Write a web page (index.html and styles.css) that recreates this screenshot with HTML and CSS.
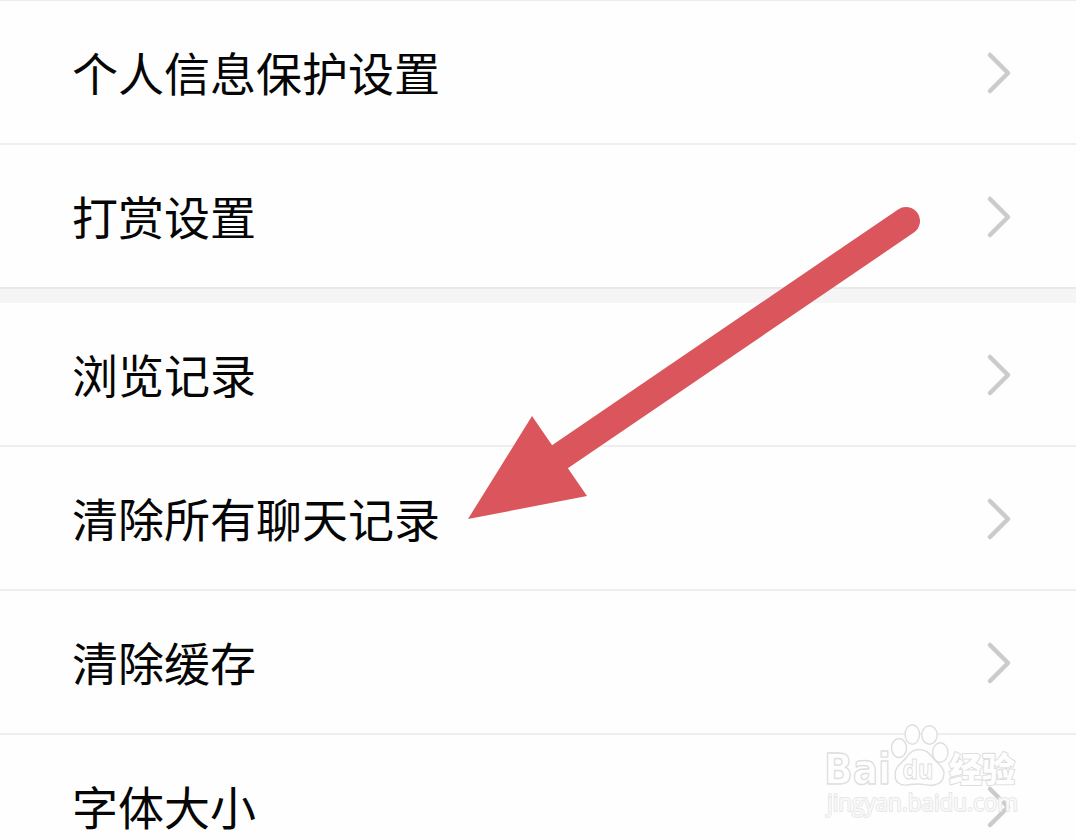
FILE: index.html
```
<!DOCTYPE html>
<html lang="zh-CN">
<head>
    <meta charset="UTF-8">
    <meta name="viewport" content="width=device-width, initial-scale=1.0">
    <title>设置</title>
    <link rel="stylesheet" href="styles.css">
</head>
<body>
    <div class="page">
        <ul class="group">
            <li class="row"><span>个人信息保护设置</span><svg class="chevron" viewBox="0 0 26 44"><path d="M4 4 L22 22 L4 40"/></svg></li>
            <li class="row"><span>打赏设置</span><svg class="chevron" viewBox="0 0 26 44"><path d="M4 4 L22 22 L4 40"/></svg></li>
        </ul>
        <ul class="group">
            <li class="row"><span>浏览记录</span><svg class="chevron" viewBox="0 0 26 44"><path d="M4 4 L22 22 L4 40"/></svg></li>
            <li class="row"><span>清除所有聊天记录</span><svg class="chevron" viewBox="0 0 26 44"><path d="M4 4 L22 22 L4 40"/></svg></li>
            <li class="row"><span>清除缓存</span><svg class="chevron" viewBox="0 0 26 44"><path d="M4 4 L22 22 L4 40"/></svg></li>
            <li class="row"><span>字体大小</span><svg class="chevron" viewBox="0 0 26 44"><path d="M4 4 L22 22 L4 40"/></svg></li>
        </ul>

        <svg class="arrow" viewBox="0 0 460 320">
            <path class="shaft" d="M446 21 L90 263.5"/>
            <path class="head" d="M8 319 L72 216 L127 296 Z"/>
        </svg>

        <svg class="watermark" viewBox="0 0 200 96">
            <g class="logo">
                <text class="bai" x="4" y="64" textLength="67" lengthAdjust="spacingAndGlyphs">Bai</text>
                <path d="M99 29.5 C93 29.5 89 33 86 38 C82 43 75 46 75 55 C75 62 80 66 87 65 C92 64 94 64 99 64 C105 64 108 66 114 65 C121 64 124 60 124 53 C124 47 117 43 113 38 C109 33 106 29.5 99 29.5 Z"/>
                <ellipse cx="79" cy="28" rx="7.5" ry="9.5"/>
                <ellipse cx="92.3" cy="14.5" rx="7.2" ry="9.7"/>
                <ellipse cx="109.5" cy="15" rx="7.7" ry="9.2"/>
                <ellipse cx="120.3" cy="32.5" rx="7.7" ry="9.7"/>
                <text class="du" x="82.5" y="59" textLength="31" lengthAdjust="spacingAndGlyphs">du</text>
                <text class="jingyan" x="129" y="62" textLength="66" lengthAdjust="spacingAndGlyphs">经验</text>
            </g>
            <text class="url" x="7" y="91" textLength="191" lengthAdjust="spacingAndGlyphs">jingyan.baidu.com</text>
        </svg>
    </div>
</body>
</html>
```
FILE: styles.css
```
* {
    box-sizing: border-box;
}
body {
    margin: 0;
    background: #fefefe;
    color: #060606;
    font-family: "Noto Sans CJK SC", sans-serif;
    overflow: hidden;
}
.page {
    position: relative;
    height: 840px;
    overflow: hidden;
    border-top: 1px solid #ececec;
}
.group {
    list-style: none;
    margin: 0;
    padding: 0;
}
.group + .group {
    border-top: 14px solid #f5f5f5;
}
.row {
    display: flex;
    align-items: center;
    justify-content: space-between;
    height: 144px;
    padding: 0 64px 0 72px;
    border-bottom: 2px solid #eeeeee;
    font-size: 46px;
    line-height: 66px;
}
.group:first-child .row:last-child {
    border-bottom-color: #e9e9e9;
}
.row span {
    padding-bottom: 2px;
}
.chevron {
    width: 26px;
    height: 44px;
    margin-top: 2px;
    fill: none;
    stroke: #cbcbcb;
    stroke-width: 4.5;
    stroke-linecap: round;
    stroke-linejoin: round;
}
.arrow {
    position: absolute;
    left: 460px;
    top: 199px;
    width: 460px;
    height: 320px;
}
.shaft {
    fill: none;
    stroke: #da565c;
    stroke-width: 28;
    stroke-linecap: round;
}
.head {
    fill: #da565c;
}
.watermark {
    position: absolute;
    left: 820px;
    top: 719px;
    width: 200px;
    height: 96px;
    overflow: visible;
}
.logo {
    fill: #fefefe;
    stroke: #dedede;
    stroke-width: 1.4;
    stroke-linejoin: round;
}
.bai {
    font: bold 42px "DejaVu Sans", sans-serif;
}
.du {
    font: bold 26px "DejaVu Sans", sans-serif;
    stroke-width: 1.1;
}
.jingyan {
    font: 900 34px "Noto Sans CJK SC", sans-serif;
    stroke-width: 2.2;
    paint-order: stroke;
}
.url {
    font: 23px "Open Sans", sans-serif;
    fill: rgba(255, 255, 255, 0.8);
    stroke: #e6e6e6;
    stroke-width: 1.8;
    stroke-linejoin: round;
    paint-order: stroke;
}
```
